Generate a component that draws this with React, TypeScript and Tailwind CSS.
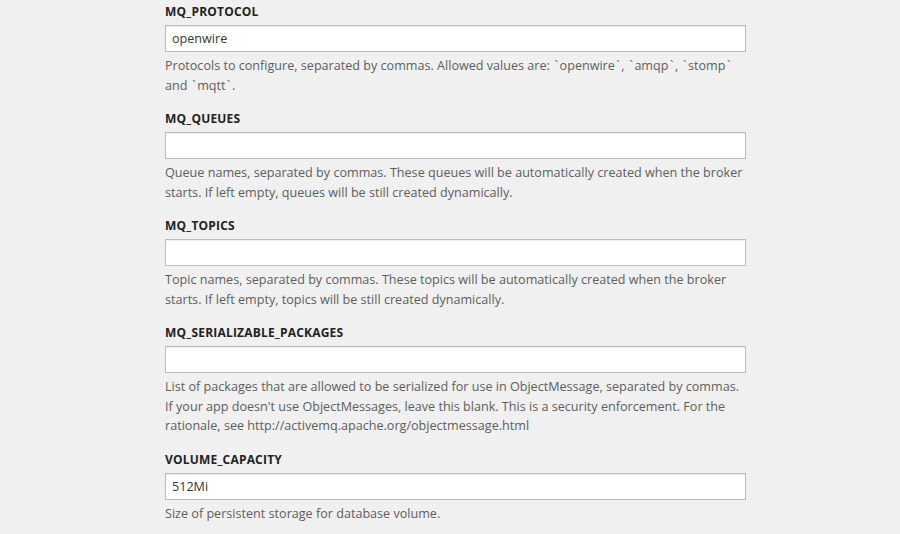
import React from 'react';

const params = [
  {
    name: 'MQ_PROTOCOL',
    value: 'openwire',
    help: 'Protocols to configure, separated by commas. Allowed values are: `openwire`, `amqp`, `stomp` and `mqtt`.',
  },
  {
    name: 'MQ_QUEUES',
    value: '',
    help: 'Queue names, separated by commas. These queues will be automatically created when the broker starts. If left empty, queues will be still created dynamically.',
  },
  {
    name: 'MQ_TOPICS',
    value: '',
    help: 'Topic names, separated by commas. These topics will be automatically created when the broker starts. If left empty, topics will be still created dynamically.',
  },
  {
    name: 'MQ_SERIALIZABLE_PACKAGES',
    value: '',
    help: "List of packages that are allowed to be serialized for use in ObjectMessage, separated by commas. If your app doesn't use ObjectMessages, leave this blank. This is a security enforcement. For the rationale, see http://activemq.apache.org/objectmessage.html",
  },
  {
    name: 'VOLUME_CAPACITY',
    value: '512Mi',
    help: 'Size of persistent storage for database volume.',
  },
];

// backticks render wider in the original, give them a little room
function Help({ text }: { text: string }) {
  const parts = text.split('`');
  return (
    <>
      {parts.map((part, i) => (
        <React.Fragment key={i}>
          {i > 0 && <span className="mx-[1.5px]">`</span>}
          {part}
        </React.Fragment>
      ))}
    </>
  );
}

export default function App() {
  return (
    <div className="min-h-[534px] w-full bg-[#f0f0f0] font-['Open_Sans',sans-serif] text-[12px] text-[#363636]">
      <div className="ml-[165px] w-[581px] pt-[2px]">
        {params.map((p) => (
          <div key={p.name} className="mb-[14px]">
            <label className="block font-bold leading-[20px] tracking-[0.2px] text-[#222]">{p.name}</label>
            <input
              readOnly
              value={p.value}
              className="mt-[3px] block h-[27px] w-full border border-[#bbb] bg-white px-[6px] text-[12.6px] text-[#363636] shadow-[inset_0_1px_1px_rgba(0,0,0,0.075)] outline-none"
            />
            <p className="mt-[4px] text-[12.6px] leading-[19.5px] text-[#5e5e5e]">
              <Help text={p.help} />
            </p>
          </div>
        ))}
      </div>
    </div>
  );
}
